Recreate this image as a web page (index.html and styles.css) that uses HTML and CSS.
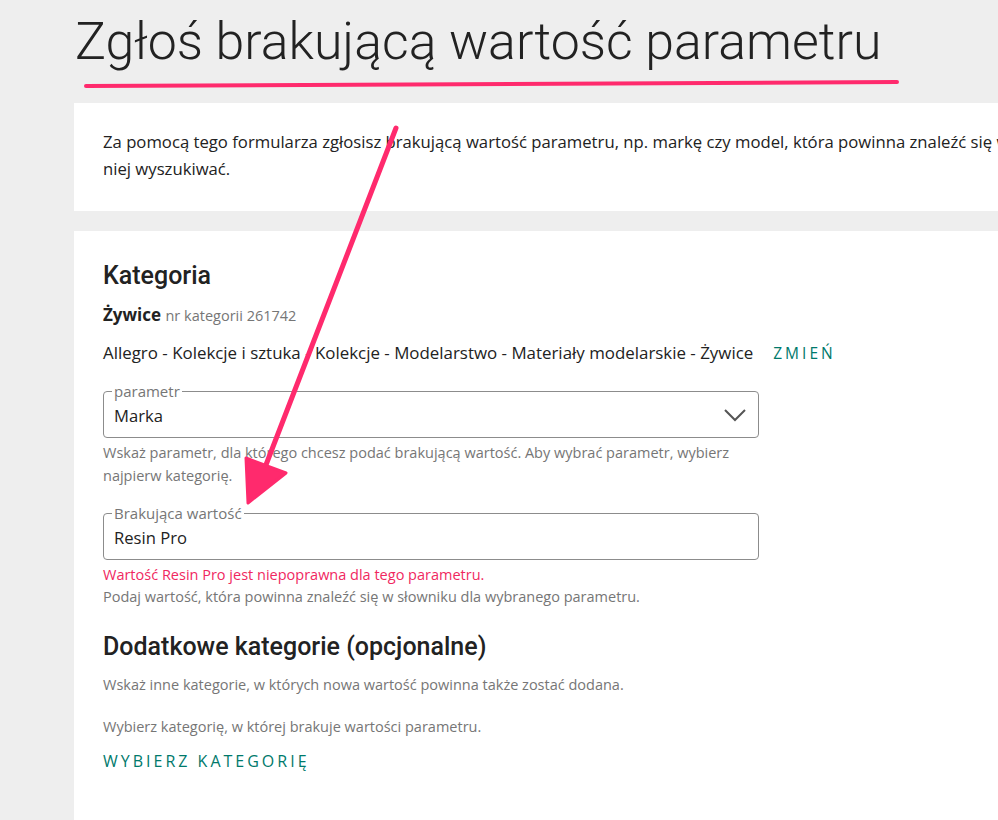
FILE: index.html
```html
<!DOCTYPE html>
<html lang="pl">
  <head>
    <meta charset="UTF-8" />
    <meta name="viewport" content="width=device-width, initial-scale=1.0" />
    <title>Zgłoś brakującą wartość parametru</title>
    <link rel="stylesheet" href="styles.css">
  </head>
  <body>
    <div id="page">
      <h1 class="page-title">Zgłoś brakującą wartość parametru</h1>

      <div class="card intro">
        <p>
          Za pomocą tego formularza zgłosisz brakującą wartość parametru, np. markę czy model, która powinna znaleźć się w słowniku, aby można było po<br />
          niej wyszukiwać.
        </p>
      </div>

      <div class="card form">
        <h2 class="section-title">Kategoria</h2>
        <div class="category-name">
          <strong>Żywice</strong> <span class="category-id">nr kategorii 261742</span>
        </div>
        <div class="breadcrumb">
          <span>Allegro - Kolekcje i sztuka - Kolekcje - Modelarstwo - Materiały modelarskie - Żywice</span>
          <a class="link-button" href="#">Zmień</a>
        </div>

        <fieldset class="field">
          <legend>parametr</legend>
          <div class="field-value">
            <span>Marka</span>
            <svg class="chevron" width="24" height="14" viewBox="0 0 24 14">
              <polyline points="2,2 12,12 22,2" fill="none" stroke="#555" stroke-width="2" />
            </svg>
          </div>
        </fieldset>
        <p class="hint">
          Wskaż parametr, dla którego chcesz podać brakującą wartość. Aby wybrać parametr, wybierz najpierw kategorię.
        </p>

        <fieldset class="field second">
          <legend>Brakująca wartość</legend>
          <div class="field-value">
            <span>Resin Pro</span>
          </div>
        </fieldset>
        <p class="hint error">Wartość Resin Pro jest niepoprawna dla tego parametru.</p>
        <p class="hint">Podaj wartość, która powinna znaleźć się w słowniku dla wybranego parametru.</p>

        <h2 class="section-title extra">Dodatkowe kategorie (opcjonalne)</h2>
        <p class="hint">Wskaż inne kategorie, w których nowa wartość powinna także zostać dodana.</p>
        <p class="hint spaced">Wybierz kategorię, w której brakuje wartości parametru.</p>
        <a class="link-button big" href="#">Wybierz kategorię</a>
      </div>
    </div>

    <svg id="annotation" width="998" height="820" viewBox="0 0 998 820">
      <line x1="86" y1="86" x2="897" y2="82" stroke="#ff2a6d" stroke-width="4" stroke-linecap="round" />
      <line x1="396" y1="128" x2="264" y2="470" stroke="#ff2a6d" stroke-width="5" stroke-linecap="round" />
      <polygon points="248,503 246,458 286,473" fill="#ff2a6d" stroke="#ff2a6d" stroke-width="3" stroke-linejoin="round" />
    </svg>
  </body>
</html>
```

FILE: styles.css
```css
html,
body {
  margin: 0;
  padding: 0;
  height: 100%;
  overflow: hidden;
}

body {
  background-color: #eeeeee;
  font-family: "Open Sans", "Liberation Sans", sans-serif;
  color: #222222;
  position: relative;
}

#page {
  padding-left: 74px;
  width: 1100px;
}

.page-title {
  margin: 0;
  height: 103px;
  box-sizing: border-box;
  padding-top: 7px;
  padding-left: 1px;
  font-family: Roboto, sans-serif;
  font-weight: 300;
  font-size: 51.8px;
  line-height: 70px;
  color: #222222;
  white-space: nowrap;
}

.card {
  background-color: #ffffff;
  padding-left: 29px;
}

.intro {
  height: 108px;
  box-sizing: border-box;
  padding-top: 25px;
  margin-bottom: 20px;
}

.intro p {
  margin: 0;
  font-size: 16.7px;
  line-height: 27px;
  white-space: nowrap;
}

.form {
  padding-top: 29px;
  padding-bottom: 60px;
}

.section-title {
  margin: 0;
  font-family: Roboto, sans-serif;
  font-weight: 500;
  font-size: 25px;
  line-height: 32px;
  color: #222222;
}

.category-name {
  margin-top: 12px;
  font-size: 17px;
  line-height: 22px;
}

.category-name strong {
  font-weight: 700;
}

.category-id {
  font-size: 14.5px;
  color: #767676;
}

.breadcrumb {
  margin-top: 15px;
  font-size: 16.9px;
  line-height: 22px;
  display: flex;
  align-items: center;
  gap: 20px;
}

.link-button {
  color: #00796b;
  text-decoration: none;
  text-transform: uppercase;
  letter-spacing: 3px;
  font-size: 15.5px;
}

.field {
  width: 656px;
  box-sizing: border-box;
  margin: 19px 0 0 0;
  padding: 0 10px;
  border: 1px solid #8c8c8c;
  border-radius: 4px;
  height: 55px;
}

.field legend {
  margin-left: -2px;
  padding: 0 2px;
  font-size: 15px;
  line-height: 17px;
  color: #767676;
}

.field.second {
  margin-top: 18px;
}

.field-value {
  display: flex;
  align-items: center;
  justify-content: space-between;
  height: 38px;
  margin-top: -4px;
  font-size: 16.6px;
}

.chevron {
  margin-right: 1px;
}

.hint {
  margin: 3px 0 0 0;
  width: 656px;
  font-size: 14.5px;
  line-height: 23px;
  color: #767676;
}

.hint.error {
  margin-top: 3px;
  color: #f0285f;
}

.hint.error + .hint {
  margin-top: -1px;
}

.section-title.extra {
  margin-top: 23px;
}

.section-title.extra + .hint {
  margin-top: 10px;
}

.hint.spaced {
  margin-top: 19px;
  width: auto;
}

.link-button.big {
  display: inline-block;
  margin-top: 12px;
  font-size: 16px;
}

#annotation {
  position: absolute;
  left: 0;
  top: 0;
  pointer-events: none;
}
```
